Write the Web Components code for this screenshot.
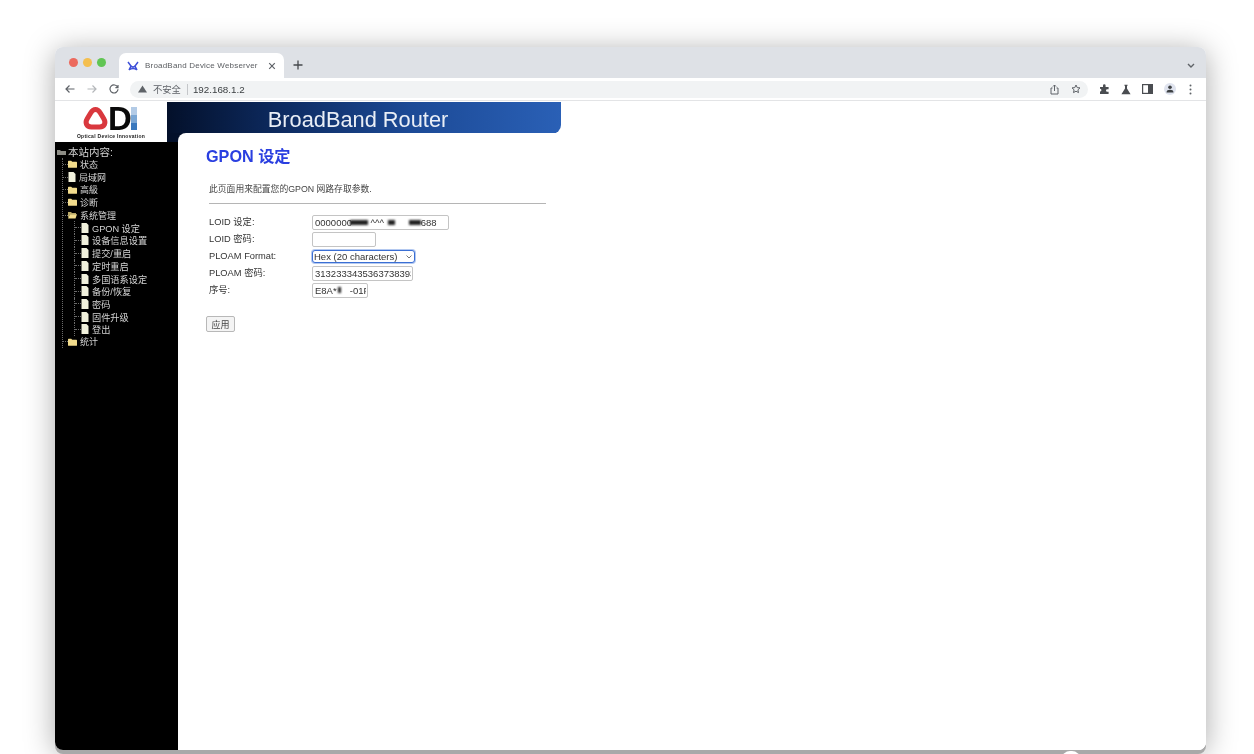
<!DOCTYPE html>
<html lang="zh">
<head>
<meta charset="utf-8">
<title>BroadBand Device Webserver</title>
<style>
  html, body { margin: 0; height: 100%; overflow: hidden; background: #fff; }
  body { font-family: "Liberation Sans", "Noto Sans CJK SC", sans-serif; }
</style>
</head>
<body>
<browser-window>
  <browser-tabs slot="tabs" title="BroadBand Device Webserver"></browser-tabs>
  <browser-toolbar slot="toolbar" url="192.168.1.2"></browser-toolbar>
  <odi-logo slot="logo"></odi-logo>
  <side-nav slot="side">
    <nav-item kind="folder">状态</nav-item>
    <nav-item kind="doc">局域网</nav-item>
    <nav-item kind="folder">高級</nav-item>
    <nav-item kind="folder">诊断</nav-item>
    <nav-item kind="open">系统管理</nav-item>
    <nav-item kind="doc" level="2">GPON 设定</nav-item>
    <nav-item kind="doc" level="2">设备信息设置</nav-item>
    <nav-item kind="doc" level="2">提交/重启</nav-item>
    <nav-item kind="doc" level="2">定时重启</nav-item>
    <nav-item kind="doc" level="2">多国语系设定</nav-item>
    <nav-item kind="doc" level="2">备份/恢复</nav-item>
    <nav-item kind="doc" level="2">密码</nav-item>
    <nav-item kind="doc" level="2">固件升级</nav-item>
    <nav-item kind="doc" level="2">登出</nav-item>
    <nav-item kind="folder">统计</nav-item>
  </side-nav>
  <router-banner slot="banner">BroadBand Router</router-banner>
  <gpon-page slot="page"></gpon-page>
</browser-window>

<template id="tpl-window">
  <style>
    :host { display: flex; flex-direction: column; box-sizing: border-box; width: 1151px; height: 703px;
      margin: 47px 0 0 55px; border-radius: 8px; background: #fff; filter: blur(.6px);
      box-shadow: 0 4px 0 #a9a9a9, 0 4px 30px rgba(0,0,0,.34); position: relative; }
    .frame { display: flex; flex-direction: column; flex: 1; min-height: 0; overflow: hidden; border-radius: 8px; }
    .site { display: grid; flex: 1; min-height: 0; padding-top: 1px;
      grid-template-columns: 112px 11px 1fr; grid-template-rows: 31px 9px 1fr; }
    .logo { grid-column: 1; grid-row: 1 / 3; display: flex; }
    .banner { grid-column: 2 / 4; grid-row: 1; display: flex; }
    .navy { grid-column: 2; grid-row: 2; background: #03102a; }
    .side { grid-column: 1 / 3; grid-row: 3; display: flex; min-height: 0; }
    .main { grid-column: 3; grid-row: 2 / 4; background: linear-gradient(#03102a 0 9px, #000 9px 14px, #fff 14px); }
    .inner { height: 100%; background: #fff; border-top-left-radius: 8px; }
    .dock { position: absolute; left: 1007px; top: 704px; width: 18px; height: 8px; border-radius: 10px 10px 0 0; background: #fff; }
  </style>
  <div class="frame">
    <slot name="tabs"></slot>
    <slot name="toolbar"></slot>
    <div class="site">
      <div class="logo"><slot name="logo"></slot></div>
      <div class="banner"><slot name="banner"></slot></div>
      <div class="navy"></div>
      <div class="side"><slot name="side"></slot></div>
      <div class="main"><div class="inner"><slot name="page"></slot></div></div>
    </div>
  </div>
  <div class="dock"></div>
</template>

<template id="tpl-tabs">
  <style>
    :host { display: flex; align-items: flex-end; height: 31px; background: #dee1e6; flex: none; position: relative; }
    .lights { display: flex; gap: 5px; margin: 0 0 11px 14px; width: 50px; }
    .lights i { width: 9px; height: 9px; border-radius: 50%; }
    .tab { display: flex; align-items: center; box-sizing: border-box; width: 165px; height: 25px; background: #fff;
      border-radius: 7px 7px 0 0; padding: 0 8px 0 8px; font-size: 8px; color: #5a5d61; }
    .tab svg.fav { margin-right: 6px; flex: none; }
    .tab span { flex: 1; white-space: nowrap; letter-spacing: .2px; }
    .plus { margin: 0 0 8px 9px; }
    .chev { margin: 0 11px 10px auto; }
  </style>
  <div class="lights"><i style="background:#ec6a5e"></i><i style="background:#f4bf4f"></i><i style="background:#61c554"></i></div>
  <div class="tab">
    <svg class="fav" width="12" height="10" viewBox="0 0 12 10" fill="none" stroke="#3d4fd8" stroke-width="1.5"><path d="M1 1l3 4-2 4M11 1L8 5l2 4M4 5q2 2 4 0M2 9q4-3 8 0"/></svg>
    <span id="t"></span>
    <svg width="8" height="8" viewBox="0 0 8 8" stroke="#5f6368" stroke-width="1.2"><path d="M1.2 1.2l5.6 5.6M6.8 1.2L1.2 6.8"/></svg>
  </div>
  <svg class="plus" width="10" height="10" viewBox="0 0 10 10" stroke="#45484c" stroke-width="1.3"><path d="M5 .5v9M.5 5h9"/></svg>
  <svg class="chev" width="8" height="5" viewBox="0 0 8 5" fill="none" stroke="#5f6368" stroke-width="1.4"><path d="M1 1l3 3 3-3"/></svg>
</template>

<template id="tpl-toolbar">
  <style>
    :host { display: flex; align-items: center; height: 23px; flex: none; background: #fff; border-bottom: 1px solid #e3e4e6; box-sizing: border-box; }
    .nav { display: flex; align-items: center; gap: 12px; padding-left: 10px; width: 65px; flex: none; }
    .omni { display: flex; align-items: center; box-sizing: border-box; width: 958px; height: 17px; border-radius: 9px; background: #f1f3f4;
      padding: 0 7px 0 8px; font-size: 9.8px; color: #3c4043; flex: none; }
    .omni .warn { color: #5f6368; font-size: 9.3px; margin-left: 6px; }
    .omni .sep { width: 1px; height: 11px; background: #c4c6c9; margin: 0 5px 0 6px; }
    .omni .url { flex: 1; }
    .omni svg + svg { margin-left: 12px; }
    .ext { display: flex; align-items: center; gap: 11px; padding-left: 11px; }
    .ava { width: 12px; height: 12px; border-radius: 50%; background: #dfe3ee; display: flex; align-items: center; justify-content: center; }
  </style>
  <div class="nav">
    <svg width="10" height="10" viewBox="0 0 10 10" fill="none" stroke="#5f6368" stroke-width="1.2"><path d="M9.5 5H1M4.5 1.5L1 5l3.5 3.5"/></svg>
    <svg width="10" height="10" viewBox="0 0 10 10" fill="none" stroke="#b4b7ba" stroke-width="1.2"><path d="M.5 5H9M5.5 1.5L9 5 5.5 8.5"/></svg>
    <svg width="10" height="10" viewBox="0 0 10 10" fill="none" stroke="#5f6368" stroke-width="1.2"><path d="M8.6 3.2A4 4 0 1 0 9 5.2M9 1v2.6H6.4"/></svg>
  </div>
  <div class="omni">
    <svg width="9" height="8" viewBox="0 0 9 8" fill="#5f6368"><path d="M4.5 .5L9 7.5H0z"/></svg>
    <span class="warn">不安全</span><span class="sep"></span><span class="url" id="u"></span>
    <svg width="9" height="11" viewBox="0 0 9 11" fill="none" stroke="#5f6368" stroke-width="1"><path d="M2.500 4H1v6h7V4H6.500M4.500 7V1M3 2.500L4.500 1 6 2.500"/></svg>
    <svg width="10" height="10" viewBox="0 0 10 10" fill="none" stroke="#5f6368" stroke-width="1"><path d="M5 1l1.200 2.600 2.800.3-2.100 1.900.6 2.800L5 7.200 2.500 8.600l.6-2.800L1 3.900l2.800-.3z"/></svg>
  </div>
  <div class="ext">
    <svg width="11" height="11" viewBox="0 0 11 11" fill="#4a4d51"><path d="M4 1.500a1.300 1.300 0 0 1 2.600 0V3h3v2.200H8.300a1.300 1.300 0 0 0 0 2.600h1.300V10H1V7.600a1.400 1.400 0 0 0 0-2.800V3h3z"/></svg>
    <svg width="10" height="11" viewBox="0 0 10 11" fill="#4a4d51"><path d="M3.400.8h3.200v1H6v2.600l3.600 5.800H.4L4 4.400V1.800h-.6z"/></svg>
    <svg width="11" height="10" viewBox="0 0 11 10" fill="none" stroke="#4a4d51" stroke-width="1.200"><rect x=".6" y=".6" width="9.800" height="8.800"/><rect x="6" y="1" width="4" height="8" fill="#4a4d51" stroke="none"/></svg>
    <div class="ava"><svg width="8" height="8" viewBox="0 0 8 8" fill="#3d4043"><circle cx="4" cy="2.300" r="1.800"/><path d="M.5 7.500c0-2 1.500-2.700 3.500-2.700s3.500.7 3.500 2.700z"/></svg></div>
    <svg width="3" height="11" viewBox="0 0 3 11" fill="#5f6368" style="margin-left:2px"><circle cx="1.500" cy="1.500" r="1"/><circle cx="1.500" cy="5.500" r="1"/><circle cx="1.500" cy="9.500" r="1"/></svg>
  </div>
</template>

<template id="tpl-logo">
  <style>
    :host { display: flex; flex-direction: column; align-items: center; width: 112px; height: 40px; flex: none; background: #fff; }
    .mark { display: block; margin: 4px 0 0 -2px; overflow: visible; }
    text { font-family: "Liberation Sans", sans-serif; font-weight: bold; }
    small { font: bold 5px/6px "Liberation Sans", sans-serif; color: #222; letter-spacing: .28px; white-space: nowrap; margin-top: 1px; }
  </style>
  <svg class="mark" width="56" height="26" viewBox="0 0 56 26" fill="none">
    <path d="M13.500 3.500c2.200 0 3.500 1.200 5 3.700l3.300 5.600c2.300 4 .8 8.200-4.200 8.200H9.400c-5 0-6.500-4.200-4.200-8.200l3.300-5.600c1.500-2.500 2.800-3.700 5-3.700z" stroke="#d9383e" stroke-width="5"/>
    <text x="26" y="24" font-size="33" fill="#0a0a0a">D</text>
    <rect x="49" y="1" width="6" height="8" fill="#b3cbe6"/><rect x="49" y="9" width="6" height="8" fill="#7aa6d4"/><rect x="49" y="17" width="6" height="7" fill="#3a78bd"/>
  </svg>
  <small>Optical Device Innovation</small>
</template>

<template id="tpl-side">
  <style>
    :host { display: flex; flex-direction: column; flex: 1; background: #000; color: #d4d4d4; padding: 4px 0 0 2px;
      font-family: "Liberation Sans", "Noto Sans CJK SC", sans-serif; }
    .root { display: flex; align-items: center; gap: 2px; font-size: 10.5px; line-height: 12px; }
    .list { display: flex; flex-direction: column; margin-left: 5px; border-left: 1px dotted #6b6b6b; margin-bottom: 6px; align-self: flex-start; }
  </style>
  <div class="root">
    <svg width="9" height="7" viewBox="0 0 9 7"><path d="M0 1h3l1 1h5v4H0z" fill="#8d8d86"/></svg>
    <span>本站内容:</span>
  </div>
  <div class="list"><slot></slot></div>
</template>

<template id="tpl-item">
  <style>
    :host { display: flex; align-items: center; height: 12.7px; font-size: 9px; white-space: nowrap; color: #d4d4d4; }
    :host([level="2"]) { padding-left: 11px; font-size: 9.2px; }
    .dash { width: 5px; border-top: 1px dotted #6b6b6b; flex: none; }
    :host([level="2"]) .stem { align-self: stretch; border-left: 1px dotted #6b6b6b; }
    :host([level="2"]) .dash { width: 6px; }
    #ic { display: flex; }
    svg { margin-right: 3px; flex: none; }
  </style>
  <span class="stem"></span><span class="dash"></span><span id="ic"></span><slot></slot>
</template>

<template id="tpl-banner">
  <style>
    :host { display: flex; align-items: center; justify-content: center; box-sizing: border-box; width: 394px; height: 32px; flex: none;
      background: linear-gradient(90deg, #03102a 0%, #0d2a5f 28%, #1c4a96 62%, #2a60b6 100%);
      border-bottom-right-radius: 9px; color: #e9eef6; font-size: 21.8px; padding-right: 12px; padding-top: 3px; }
  </style>
  <slot></slot>
</template>

<template id="tpl-page">
  <style>
    :host { display: block; padding: 13px 0 0 28px; color: #333; font-size: 9.3px; font-family: "Liberation Sans", "Noto Sans CJK SC", sans-serif; }
    h1 { margin: 0; font-size: 16.2px; line-height: 20px; color: #2a3fe0; font-weight: bold; }
    p { margin: 17px 0 0 3px; font-size: 8.8px; line-height: 12px; color: #444; }
    hr { margin: 8px 0 0 3px; width: 337px; height: 1px; border: 0; background: #b5b5b5; }
    form { margin: 10px 0 0 3px; display: grid; grid-template-columns: 103px 1fr; grid-auto-rows: 17px; align-items: center; }
    label { line-height: 12px; margin-bottom: 1px; }
    input, select { box-sizing: border-box; font: 9.5px "Liberation Sans", sans-serif; color: #333; background: #fff; margin: 0; }
    input { border: 1px solid #c4c4c4; border-radius: 2px; height: 15px; padding: 0 1px 0 2px; outline: none; white-space: pre; }
    select { appearance: none; -webkit-appearance: none; border: 1px solid #3b6fd4; box-shadow: 0 0 0 1px #b4c9f0; border-radius: 3px; height: 13px; width: 103px; padding: 0 1px; outline: none; }
    .field { position: relative; display: flex; align-items: center; justify-self: start; }
    .smudge { position: absolute; top: 5px; height: 5px; background: #222; filter: blur(1px); }
    .chev { position: absolute; right: 3px; top: 5px; }
    button { margin: 17px 0 0 0; box-sizing: border-box; width: 29px; height: 16px; font: 9px "Noto Sans CJK SC", sans-serif; color: #444;
      background: #f4f4f4; border: 1px solid #b8b8b8; border-radius: 2px; padding: 0; display: block; }
  </style>
  <h1>GPON 设定</h1>
  <p>此页面用来配置您的GPON 网路存取参数.</p>
  <hr>
  <form>
    <label>LOID 设定:</label>
    <span class="field"><input style="width:137px" value="0000000       ^^^              688" readonly><span class="smudge" style="left:38px;width:18px"></span><span class="smudge" style="left:76px;width:7px"></span><span class="smudge" style="left:97px;width:12px"></span></span>
    <label>LOID 密码:</label>
    <span class="field"><input style="width:64px" readonly></span>
    <label>PLOAM Format:</label>
    <span class="field"><select><option>Hex (20 characters)</option></select><svg class="chev" width="6" height="4" viewBox="0 0 6 4" fill="none" stroke="#777" stroke-width="1"><path d="M.5 .5L3 3l2.500-2.500"/></svg></span>
    <label>PLOAM 密码:</label>
    <span class="field"><input style="width:101px" value="31323334353637383930" readonly></span>
    <label>序号:</label>
    <span class="field"><input style="width:56px" value="E8A*     -01F" readonly><span class="smudge" style="left:26px;width:3px;top:4px;height:6px"></span></span>
  </form>
  <button type="button">应用</button>
</template>

<script>
  // small helper: every element clones its own template into an open shadow root
  function shadowFrom(el, id) {
    el.attachShadow({ mode: "open" }).appendChild(document.getElementById(id).content.cloneNode(true));
    return el.shadowRoot;
  }

  const ICONS = {
    folder: '<svg width="9" height="8" viewBox="0 0 9 8"><path d="M0 1.500Q0 .8 .7 .8h2.500l1 1h4.100q.7 0 .7.7v4.700q0 .6-.7.6H.7Q0 7.800 0 7.200z" fill="#f2dc8c"/></svg>',
    open: '<svg width="9" height="8" viewBox="0 0 9 8"><path d="M0 1h3l1 1h4v1.500H2L0 7z" fill="#b9a766"/><path d="M2 3.200h7L7.500 7.500H0z" fill="#f2dc8c"/></svg>',
    doc: '<svg width="8" height="10" viewBox="0 0 8 10"><path d="M.5 0h5l2 2v8h-7z" fill="#f1f1dc"/></svg>'
  };

  class BrowserWindow extends HTMLElement {
    constructor() { super(); shadowFrom(this, "tpl-window"); }
  }
  class BrowserTabs extends HTMLElement {
    constructor() { super(); shadowFrom(this, "tpl-tabs"); }
    connectedCallback() { this.shadowRoot.getElementById("t").textContent = this.getAttribute("title"); }
  }
  class BrowserToolbar extends HTMLElement {
    constructor() { super(); shadowFrom(this, "tpl-toolbar"); }
    connectedCallback() { this.shadowRoot.getElementById("u").textContent = this.getAttribute("url"); }
  }
  class OdiLogo extends HTMLElement {
    constructor() { super(); shadowFrom(this, "tpl-logo"); }
  }
  class SideNav extends HTMLElement {
    constructor() { super(); shadowFrom(this, "tpl-side"); }
  }
  class NavItem extends HTMLElement {
    constructor() { super(); shadowFrom(this, "tpl-item"); }
    connectedCallback() { this.shadowRoot.getElementById("ic").innerHTML = ICONS[this.getAttribute("kind")]; }
  }
  class RouterBanner extends HTMLElement {
    constructor() { super(); shadowFrom(this, "tpl-banner"); }
  }
  class GponPage extends HTMLElement {
    constructor() { super(); shadowFrom(this, "tpl-page"); }
  }

  customElements.define("browser-window", BrowserWindow);
  customElements.define("browser-tabs", BrowserTabs);
  customElements.define("browser-toolbar", BrowserToolbar);
  customElements.define("odi-logo", OdiLogo);
  customElements.define("side-nav", SideNav);
  customElements.define("nav-item", NavItem);
  customElements.define("router-banner", RouterBanner);
  customElements.define("gpon-page", GponPage);
</script>
</body>
</html>
